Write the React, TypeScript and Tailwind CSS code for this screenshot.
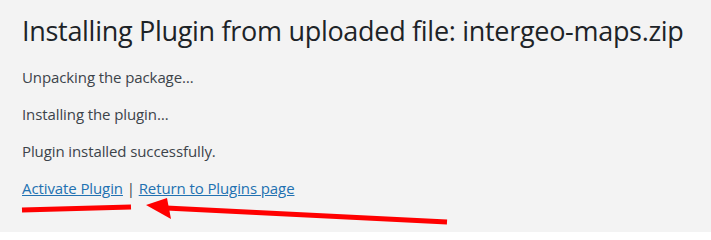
export default function App() {
  return (
    <div className="relative h-[232px] w-[711px] overflow-hidden bg-[#f3f3f3] pl-[22px] pt-[12px] font-['Open_Sans',sans-serif]">
      <h1 className="whitespace-nowrap text-[27px] leading-[38px] font-normal tracking-[-0.3px] text-[#1d2327]">
        Installing Plugin from uploaded file: intergeo-maps.zip
      </h1>
      <div className="mt-[17px] flex flex-col gap-[16px] text-[15px] leading-[21px] tracking-[-0.1px] text-[#3c434a]">
        <p>Unpacking the package…</p>
        <p>Installing the plugin…</p>
        <p>Plugin installed successfully.</p>
        <p>
          <a href="#" className="text-[#2271b1] underline">Activate Plugin</a>
          <span> | </span>
          <a href="#" className="text-[#2271b1] underline">Return to Plugins page</a>
        </p>
      </div>
      {/* red annotation */}
      <svg className="absolute left-0 top-0" width="711" height="232" viewBox="0 0 711 232">
        <line x1="22" y1="210" x2="131" y2="207" stroke="#ff0000" strokeWidth="5" />
        <line x1="166" y1="208" x2="447" y2="222" stroke="#ff0000" strokeWidth="5" />
        <polygon points="146,205 167,198 171,219" fill="#ff0000" />
      </svg>
    </div>
  );
}
